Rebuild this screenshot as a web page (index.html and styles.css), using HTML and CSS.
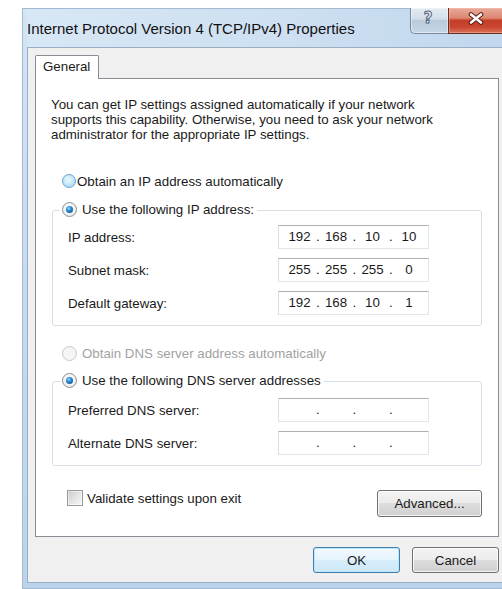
FILE: index.html
```html
<!DOCTYPE html>
<html>
<head>
<meta charset="utf-8">
<title>Internet Protocol Version 4 (TCP/IPv4) Properties</title>
<link rel="stylesheet" href="styles.css">
</head>
<body>
<div class="window">
  <div class="titlebar">
    <span class="title">Internet Protocol Version 4 (TCP/IPv4) Properties</span>
    <div class="caption-buttons">
      <span class="cap-btn cap-help"><span class="help-glyph">?</span></span>
      <span class="cap-btn cap-close">
        <svg class="close-x" width="16" height="13" viewBox="0 0 16 13">
          <path d="M3 2.5 L13 10.5 M13 2.5 L3 10.5" stroke="#5b1e14" stroke-width="4.6" stroke-linecap="round"/>
          <path d="M3 2.5 L13 10.5 M13 2.5 L3 10.5" stroke="#ffffff" stroke-width="2.6" stroke-linecap="round"/>
        </svg>
      </span>
    </div>
  </div>

  <div class="client">
    <div class="tabs"><span class="tab tab-active">General</span></div>

    <div class="panel">
      <p class="intro">You can get IP settings assigned automatically if your network<br>supports this capability. Otherwise, you need to ask your network<br>administrator for the appropriate IP settings.</p>

      <div class="option option-first"><span class="radio radio-hot"></span><span class="option-text">Obtain an IP address automatically</span></div>

      <div class="group group-ip">
        <div class="group-head"><span class="radio radio-on"></span><span class="option-text">Use the following IP address:</span></div>
        <div class="rows">
          <div class="row">
            <span class="row-label">IP address:</span>
            <div class="ip-box"><span class="oct">192</span><span class="sep">.</span><span class="oct">168</span><span class="sep">.</span><span class="oct">10</span><span class="sep">.</span><span class="oct">10</span></div>
          </div>
          <div class="row">
            <span class="row-label">Subnet mask:</span>
            <div class="ip-box"><span class="oct">255</span><span class="sep">.</span><span class="oct">255</span><span class="sep">.</span><span class="oct">255</span><span class="sep">.</span><span class="oct">0</span></div>
          </div>
          <div class="row">
            <span class="row-label">Default gateway:</span>
            <div class="ip-box"><span class="oct">192</span><span class="sep">.</span><span class="oct">168</span><span class="sep">.</span><span class="oct">10</span><span class="sep">.</span><span class="oct">1</span></div>
          </div>
        </div>
      </div>

      <div class="option option-disabled"><span class="radio radio-disabled"></span><span class="option-text">Obtain DNS server address automatically</span></div>

      <div class="group group-dns">
        <div class="group-head"><span class="radio radio-on"></span><span class="option-text">Use the following DNS server addresses</span></div>
        <div class="rows">
          <div class="row">
            <span class="row-label">Preferred DNS server:</span>
            <div class="ip-box"><span class="oct"></span><span class="sep">.</span><span class="oct"></span><span class="sep">.</span><span class="oct"></span><span class="sep">.</span><span class="oct"></span></div>
          </div>
          <div class="row">
            <span class="row-label">Alternate DNS server:</span>
            <div class="ip-box"><span class="oct"></span><span class="sep">.</span><span class="oct"></span><span class="sep">.</span><span class="oct"></span><span class="sep">.</span><span class="oct"></span></div>
          </div>
        </div>
      </div>

      <div class="check-row">
        <label class="check"><span class="checkbox"></span><span class="check-text">Validate settings upon exit</span></label>
        <button class="btn btn-advanced">Advanced...</button>
      </div>
    </div>

    <div class="dialog-buttons">
      <button class="btn btn-default">OK</button>
      <button class="btn">Cancel</button>
    </div>
  </div>
</div>
</body>
</html>
```

FILE: styles.css
```css
html, body {
  margin: 0;
  padding: 0;
  background: #ffffff;
  overflow: hidden;
  width: 502px;
  height: 589px;
}

body {
  font-family: "Liberation Sans", Arial, sans-serif;
  font-size: 13.3px;
  color: #1a1a1a;
}

/* window frame */
.window {
  margin: 8px 0 0 22px;
  width: 490px;
  box-sizing: border-box;
  border: 1px solid #a3bad3;
  padding: 0 4px 5px 4px;
  background: linear-gradient(to bottom, #d3e4f4 0%, #c9dcf0 40%, #bcd3eb 100%);
}

.titlebar {
  height: 38px;
  display: flex;
  align-items: flex-start;
  background: linear-gradient(to right, #d8e7f5 0%, #cddff1 55%, #c1d7ed 100%);
}

.title {
  margin-top: 11px;
  font-size: 15px;
  color: #111111;
  white-space: nowrap;
}

.caption-buttons {
  margin-left: auto;
  margin-top: -1px;
  display: flex;
}

.cap-btn {
  height: 26px;
  box-sizing: border-box;
  display: flex;
  align-items: center;
  justify-content: center;
}

.cap-help {
  width: 38px;
  border: 1px solid #758ba4;
  border-top: none;
  border-right: none;
  border-radius: 0 0 0 5px;
  background: linear-gradient(to bottom, #e3ebf3 0%, #d2dee9 45%, #bacbdd 50%, #c6d6e6 100%);
  box-shadow: inset 0 0 0 1px rgba(255,255,255,0.45);
}

.help-glyph {
  font-family: "DejaVu Sans", sans-serif;
  font-weight: bold;
  font-size: 15px;
  line-height: 1;
  color: #f4f7fa;
  -webkit-text-stroke: 1px #53667c;
  margin-top: -4px;
  margin-left: -3px;
}

.cap-close {
  width: 59px;
  border: 1px solid #6e2b1f;
  border-top: none;
  border-radius: 0 0 5px 0;
  background: linear-gradient(to bottom, #e9ab9b 0%, #dc8670 40%, #c53f29 50%, #c9452f 75%, #d8735a 100%);
  box-shadow: inset 0 0 0 1px rgba(255,210,200,0.35);
}

.close-x {
  display: block;
  margin: -4px 4px 0 0;
}

/* client area */
.client {
  border: 1px solid #98aec4;
  background: #f0f0f0;
  padding: 7px 7px 9px 7px;
}

.tabs {
  height: 23px;
  display: flex;
  align-items: flex-start;
}

.tab {
  height: 24px;
  box-sizing: border-box;
  padding: 0 8px 0 7px;
  line-height: 22px;
  border: 1px solid #898c95;
  border-bottom: none;
  border-radius: 2px 2px 0 0;
  background: #ffffff;
  position: relative;
  z-index: 1;
}

.panel {
  border: 1px solid #898c95;
  background: #ffffff;
  padding: 18px 16px 19px 16px;
}

.intro {
  margin: 0 0 0 -1px;
  line-height: 15px;
}

/* radio options */
.option,
.group-head {
  display: flex;
  align-items: center;
  height: 16px;
  white-space: nowrap;
}

.option {
  margin-left: 10px;
}

.option-first {
  margin-top: 31px;
}

.option-first .option-text {
  margin-left: 1px;
}

.option-text {
  margin-left: 5px;
}

.option-disabled {
  margin-top: 19px;
  color: #a2a2a2;
}

.radio {
  width: 15px;
  height: 15px;
  box-sizing: border-box;
  border-radius: 50%;
  border: 1px solid #8f9396;
  background: radial-gradient(circle at 50% 40%, #ffffff 0%, #e9e9e9 100%);
  position: relative;
  flex: none;
}

.radio-hot {
  width: 14px;
  height: 14px;
  border-color: #6aa6cf;
  background: radial-gradient(circle at 45% 40%, #eef9fe 0%, #bfe5f8 55%, #8fcbec 100%);
}

.radio-on {
  border-color: #8c9094;
  background: radial-gradient(circle at 50% 40%, #ffffff 0%, #e2e6ea 100%);
}

.radio-on::after {
  content: "";
  position: absolute;
  left: 3px;
  top: 3px;
  width: 7px;
  height: 7px;
  border-radius: 50%;
  background: radial-gradient(circle at 40% 35%, #9be0ff 0%, #2e8fd6 35%, #0c3f73 100%);
}

.radio-disabled {
  border-color: #c8c8c8;
  background: #f5f5f5;
}

/* group boxes */
.group {
  border: 1px solid #d5dfe5;
  border-radius: 3px;
  padding: 0 0 10px 15px;
}

.group-ip {
  margin-top: 21px;
}

.group-dns {
  margin-top: 20px;
}

.group-head {
  margin: -10px 0 0 -8px;
  padding: 0 3px 0 2px;
  background: #ffffff;
  align-self: flex-start;
  width: max-content;
}

.group-ip .rows {
  margin-top: 8px;
}

.group-dns .rows {
  margin-top: 10px;
}

.rows {
  display: flex;
  flex-direction: column;
  gap: 9px;
}

.row {
  display: flex;
  align-items: center;
  height: 24px;
}

.row-label {
  width: 210px;
  flex: none;
}

.ip-box {
  width: 151px;
  height: 24px;
  box-sizing: border-box;
  border: 1px solid #e2e6ec;
  border-top-color: #acb0b6;
  border-left-color: #dadde3;
  background: #ffffff;
  display: flex;
  align-items: center;
  padding-left: 5px;
  line-height: 22px;
}

.oct {
  width: 31px;
  text-align: center;
}

.sep {
  width: 5.5px;
  text-align: center;
}

/* checkbox + advanced */
.check-row {
  margin-top: 24px;
  display: flex;
  justify-content: space-between;
  align-items: flex-start;
}

.check {
  display: flex;
  align-items: center;
  height: 16px;
  margin-left: 15px;
}

.checkbox {
  width: 16px;
  height: 16px;
  box-sizing: border-box;
  border: 1px solid #9a9a9a;
  background: linear-gradient(135deg, #c9c9c9 0%, #e4e4e4 50%, #f6f6f6 100%);
  box-shadow: inset 0 0 0 1px rgba(255,255,255,0.5);
}

.check-text {
  margin-left: 4px;
}

/* push buttons */
.btn {
  font-family: "Liberation Sans", Arial, sans-serif;
  font-size: 13.3px;
  color: #1a1a1a;
  width: 87px;
  height: 26px;
  padding: 0;
  border: 1px solid #707070;
  border-radius: 3px;
  background: linear-gradient(to bottom, #f3f3f3 0%, #ececec 48%, #dddddd 50%, #d0d0d0 100%);
  box-shadow: inset 0 0 0 1px rgba(255,255,255,0.75);
}

.btn-advanced {
  width: 105px;
  height: 27px;
}

.btn-default {
  border-color: #3c7fb1;
  background: linear-gradient(to bottom, #f2f9fe 0%, #e6f4fc 48%, #d8eefb 50%, #cde8f8 100%);
  box-shadow: inset 0 0 0 1px #bde6fa;
}

.dialog-buttons {
  margin-top: 10px;
  display: flex;
  justify-content: flex-end;
  gap: 12px;
}
```
